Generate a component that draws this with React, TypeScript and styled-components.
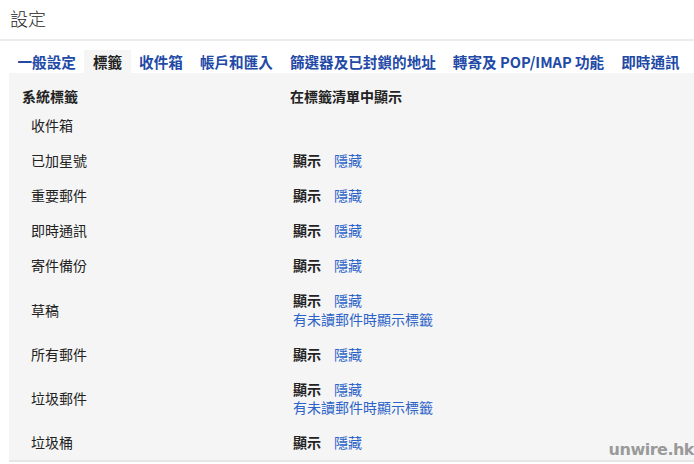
import styled, { createGlobalStyle } from 'styled-components';

const GlobalStyle = createGlobalStyle`
  html, body {
    margin: 0;
    padding: 0;
    background: #fff;
  }
  body {
    font-family: 'Noto Sans CJK TC', 'Noto Sans', sans-serif;
    color: #222;
  }
`;

const Page = styled.div`
  position: relative;
  width: 694px;
  height: 464px;
  overflow: hidden;
`;

const Title = styled.div`
  height: 35px;
  padding: 0 0 4px 10px;
  display: flex;
  align-items: center;
  font-size: 18px;
  font-weight: 300;
  color: #222;
  border-bottom: 2px solid #ececec;
`;

const Tabs = styled.nav`
  display: flex;
  margin-top: 9px;
  padding-left: 9px;
`;

const Tab = styled.div<{ $active?: boolean }>`
  height: 23px;
  padding: 0 8.5px;
  display: flex;
  align-items: center;
  font-size: 14.6px;
  font-weight: 700;
  white-space: nowrap;
  color: ${(p) => (p.$active ? '#222' : '#2249a6')};
  background: ${(p) => (p.$active ? '#f5f5f5' : 'transparent')};
`;

const Panel = styled.section`
  margin-left: 9px;
  background: #f5f5f5;
  border-bottom: 2px solid #e6e6e6;
  font-size: 14px;
  line-height: 18.5px;
`;

const Row = styled.div<{ $head?: boolean }>`
  display: grid;
  grid-template-columns: 281px 1fr;
  padding: ${(p) => (p.$head ? '13.5px 0 3px' : '8.25px 0')};
`;

const Label = styled.div<{ $head?: boolean }>`
  padding-left: ${(p) => (p.$head ? '13px' : '22px')};
  font-weight: ${(p) => (p.$head ? 700 : 400)};
  align-self: center;
`;

const Actions = styled.div<{ $head?: boolean }>`
  padding-left: ${(p) => (p.$head ? '0' : '3px')};
  font-weight: ${(p) => (p.$head ? 700 : 400)};
`;

const Line = styled.div`
  display: flex;
  gap: 13px;
`;

const Show = styled.span`
  font-weight: 700;
  color: #222;
`;

const Link = styled.span`
  color: #2c63c8;
`;

const Watermark = styled.div`
  position: absolute;
  right: 0;
  bottom: 5px;
  font-family: 'DejaVu Sans', sans-serif;
  font-size: 16px;
  font-weight: 700;
  color: #9a9a9a;
  letter-spacing: -0.5px;
`;

const tabs = [
  '一般設定',
  '標籤',
  '收件箱',
  '帳戶和匯入',
  '篩選器及已封鎖的地址',
  '轉寄及 POP/IMAP 功能',
  '即時通訊',
];

type LabelItem = { name: string; actions: boolean; unread?: boolean };

const labels: LabelItem[] = [
  { name: '收件箱', actions: false },
  { name: '已加星號', actions: true },
  { name: '重要郵件', actions: true },
  { name: '即時通訊', actions: true },
  { name: '寄件備份', actions: true },
  { name: '草稿', actions: true, unread: true },
  { name: '所有郵件', actions: true },
  { name: '垃圾郵件', actions: true, unread: true },
  { name: '垃圾桶', actions: true },
];

export default function App() {
  return (
    <Page>
      <GlobalStyle />
      <Title>設定</Title>
      <Tabs>
        {tabs.map((t) => (
          <Tab key={t} $active={t === '標籤'}>
            {t}
          </Tab>
        ))}
      </Tabs>
      <Panel>
        <Row $head>
          <Label $head>系統標籤</Label>
          <Actions $head>在標籤清單中顯示</Actions>
        </Row>
        {labels.map((l) => (
          <Row key={l.name}>
            <Label>{l.name}</Label>
            <Actions>
              {l.actions && (
                <Line>
                  <Show>顯示</Show>
                  <Link>隱藏</Link>
                </Line>
              )}
              {l.unread && <Link>有未讀郵件時顯示標籤</Link>}
              {!l.actions && '\u00a0'}
            </Actions>
          </Row>
        ))}
      </Panel>
      <Watermark>unwire.hk</Watermark>
    </Page>
  );
}
